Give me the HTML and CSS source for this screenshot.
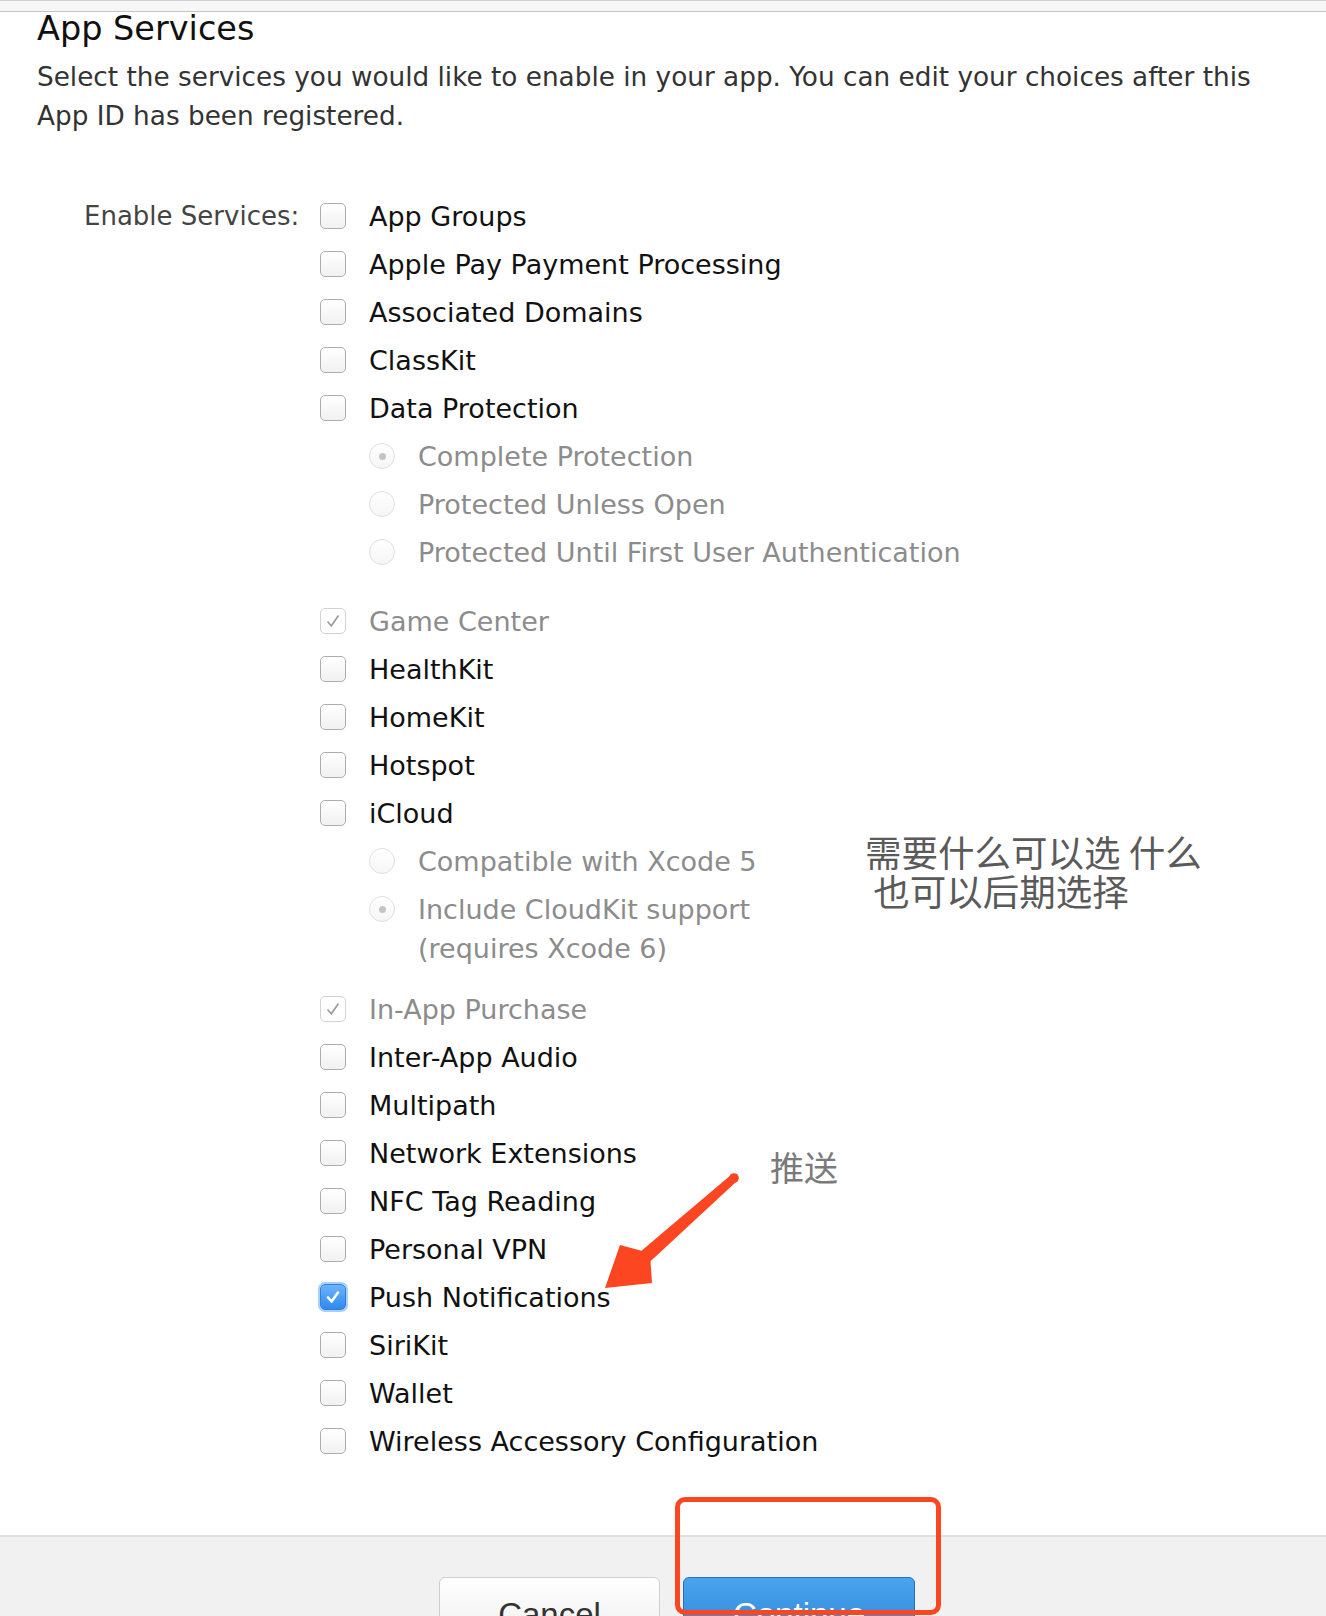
FILE: index.html
```html
<!DOCTYPE html>
<html lang="en">
<head>
  <meta charset="UTF-8" />
  <title>App Services</title>
  <link rel="stylesheet" href="styles.css">
</head>
<body>
  <div class="page">
    <div class="topbar"></div>

    <h1 class="title">App Services</h1>
    <p class="intro">Select the services you would like to enable in your app. You can edit your choices after this App ID has been registered.</p>

    <div class="services">
      <div class="services-label">Enable Services:</div>
      <ul class="service-list">
        <li class="option"><span class="checkbox"></span><span>App Groups</span></li>
        <li class="option"><span class="checkbox"></span><span>Apple Pay Payment Processing</span></li>
        <li class="option"><span class="checkbox"></span><span>Associated Domains</span></li>
        <li class="option"><span class="checkbox"></span><span>ClassKit</span></li>
        <li class="option"><span class="checkbox"></span><span>Data Protection</span></li>
        <li>
          <ul class="sub-list">
            <li class="option is-muted"><span class="radio is-selected"></span><span>Complete Protection</span></li>
            <li class="option is-muted"><span class="radio"></span><span>Protected Unless Open</span></li>
            <li class="option is-muted"><span class="radio"></span><span>Protected Until First User Authentication</span></li>
          </ul>
        </li>
        <li class="option is-muted">
          <span class="checkbox is-disabled">
            <svg width="20" height="20" viewBox="0 0 20 20"><path d="M4.5 10.5l3.8 4.3L15.5 4.5" fill="none" stroke="#9d9d9d" stroke-width="1.7"/></svg>
          </span><span>Game Center</span>
        </li>
        <li class="option"><span class="checkbox"></span><span>HealthKit</span></li>
        <li class="option"><span class="checkbox"></span><span>HomeKit</span></li>
        <li class="option"><span class="checkbox"></span><span>Hotspot</span></li>
        <li class="option"><span class="checkbox"></span><span>iCloud</span></li>
        <li>
          <ul class="sub-list sub-list-tight">
            <li class="option is-muted"><span class="radio"></span><span>Compatible with Xcode 5</span></li>
            <li class="option is-muted"><span class="radio is-selected"></span><span>Include CloudKit support<br>(requires Xcode 6)</span></li>
          </ul>
        </li>
        <li class="option is-muted">
          <span class="checkbox is-disabled">
            <svg width="20" height="20" viewBox="0 0 20 20"><path d="M4.5 10.5l3.8 4.3L15.5 4.5" fill="none" stroke="#9d9d9d" stroke-width="1.7"/></svg>
          </span><span>In-App Purchase</span>
        </li>
        <li class="option"><span class="checkbox"></span><span>Inter-App Audio</span></li>
        <li class="option"><span class="checkbox"></span><span>Multipath</span></li>
        <li class="option"><span class="checkbox"></span><span>Network Extensions</span></li>
        <li class="option"><span class="checkbox"></span><span>NFC Tag Reading</span></li>
        <li class="option"><span class="checkbox"></span><span>Personal VPN</span></li>
        <li class="option">
          <span class="checkbox is-checked">
            <svg width="20" height="20" viewBox="0 0 20 20"><path d="M5 10.5l3.6 4L15 5.5" fill="none" stroke="#fff" stroke-width="2.6" stroke-linecap="round" stroke-linejoin="round"/></svg>
          </span><span>Push Notifications</span>
        </li>
        <li class="option"><span class="checkbox"></span><span>SiriKit</span></li>
        <li class="option"><span class="checkbox"></span><span>Wallet</span></li>
        <li class="option"><span class="checkbox"></span><span>Wireless Accessory Configuration</span></li>
      </ul>
    </div>

    <div class="footer">
      <button class="btn btn-cancel">Cancel</button>
      <button class="btn btn-continue">Continue</button>
    </div>

    <!-- annotations drawn over the page -->
    <div class="note note-services">需要什么可以选 什么<br>&nbsp;也可以后期选择</div>
    <div class="note note-push">推送</div>
    <svg class="arrow" width="160" height="135" viewBox="0 0 160 135">
      <circle cx="144" cy="13" r="4.8" fill="#fb4621"/>
      <polygon points="141.2,9.7 51.5,85.7 30,80 15,123 62,118 60.5,96.3 146.8,16.3" fill="#fb4621"/>
    </svg>
    <div class="highlight"></div>
  </div>
</body>
</html>
```
FILE: styles.css
```css
body {
  margin: 0;
  background: #fff;
  font-family: "DejaVu Sans", sans-serif;
  color: #111;
}

.page {
  position: relative;
  width: 1326px;
}

.topbar {
  height: 10px;
  background: #f6f6f6;
  border-top: 1px solid #d2d2d2;
  border-bottom: 1px solid #c4c4c4;
}

.title {
  margin: 0;
  padding: 2px 37px 0;
  font-size: 33.5px;
  font-weight: normal;
  line-height: 30px;
  color: #111;
}

.intro {
  margin: 14px 0 0;
  padding: 0 37px;
  font-size: 26.3px;
  line-height: 39px;
  color: #333;
}

.services {
  display: grid;
  grid-template-columns: 215px 1fr;
  column-gap: 21px;
  margin-top: 56px;
  padding-left: 84px;
}

.services-label {
  padding: 4.5px 0;
  font-size: 26px;
  line-height: 39px;
  color: #444;
  white-space: nowrap;
}

.service-list, .sub-list {
  list-style: none;
  margin: 0;
  padding: 0;
}

.sub-list {
  margin-bottom: 21px;
  padding-left: 49px;
}

.sub-list-tight {
  margin-bottom: 13px;
}

.option {
  display: flex;
  align-items: flex-start;
  gap: 23px;
  padding: 4.5px 0;
  font-size: 27px;
  line-height: 39px;
  white-space: nowrap;
}

.option.is-muted {
  color: #8c8c8c;
}

.checkbox {
  flex: none;
  box-sizing: border-box;
  width: 26px;
  height: 26px;
  margin-top: 6.5px;
  border: 1px solid #adadad;
  border-radius: 5px;
  background: linear-gradient(#fff, #f1f1f1);
  display: flex;
  align-items: center;
  justify-content: center;
}

.checkbox.is-disabled {
  border-color: #d2d2d2;
  background: #fff;
}

.checkbox.is-checked {
  border-color: #2f80e2;
  background: linear-gradient(#6cb4fb, #2f89ee);
  box-shadow: 0 0 0 2px #a9d0f8;
}

.radio {
  flex: none;
  box-sizing: border-box;
  width: 26px;
  height: 26px;
  margin-top: 6.5px;
  border: 1px solid #e0e0e0;
  border-radius: 50%;
  background: linear-gradient(#fff, #f6f6f6);
  display: flex;
  align-items: center;
  justify-content: center;
}

.radio.is-selected::after {
  content: "";
  width: 7px;
  height: 7px;
  border-radius: 50%;
  background: #c4c4c4;
}

.footer {
  display: flex;
  justify-content: center;
  gap: 23px;
  height: 81px;
  margin-top: 70px;
  padding: 40px 0 0 28px;
  box-sizing: border-box;
  overflow: hidden;
  background: #f1f1f1;
  border-top: 2px solid #e0e0e0;
}

.btn {
  flex: none;
  height: 64px;
  padding: 11px 0 0;
  border-radius: 6px;
  font-family: "Liberation Sans", Arial, sans-serif;
  font-size: 33px;
  line-height: normal;
  text-align: center;
  align-self: flex-start;
  cursor: pointer;
}

.btn-cancel {
  width: 221px;
  color: #333;
  border: 1px solid #cfcfcf;
  background: linear-gradient(#fff, #efefef);
}

.btn-continue {
  width: 232px;
  color: #fff;
  border: 1px solid #1d73c4;
  background: linear-gradient(#4ba4ec, #2a85d8);
}

.note {
  position: absolute;
  font-family: "Noto Sans CJK SC", sans-serif;
  white-space: nowrap;
}

.note-services {
  left: 865px;
  top: 832px;
  font-size: 36.5px;
  line-height: 39px;
  color: #5a5a5a;
}

.note-push {
  left: 770px;
  top: 1150px;
  font-size: 34px;
  line-height: 34px;
  color: #7a7a7a;
}

.arrow {
  position: absolute;
  left: 590px;
  top: 1165px;
}

.highlight {
  position: absolute;
  left: 675px;
  top: 1497px;
  width: 266px;
  height: 118px;
  box-sizing: border-box;
  border: 5px solid #fb4621;
  border-radius: 10px;
}
```
